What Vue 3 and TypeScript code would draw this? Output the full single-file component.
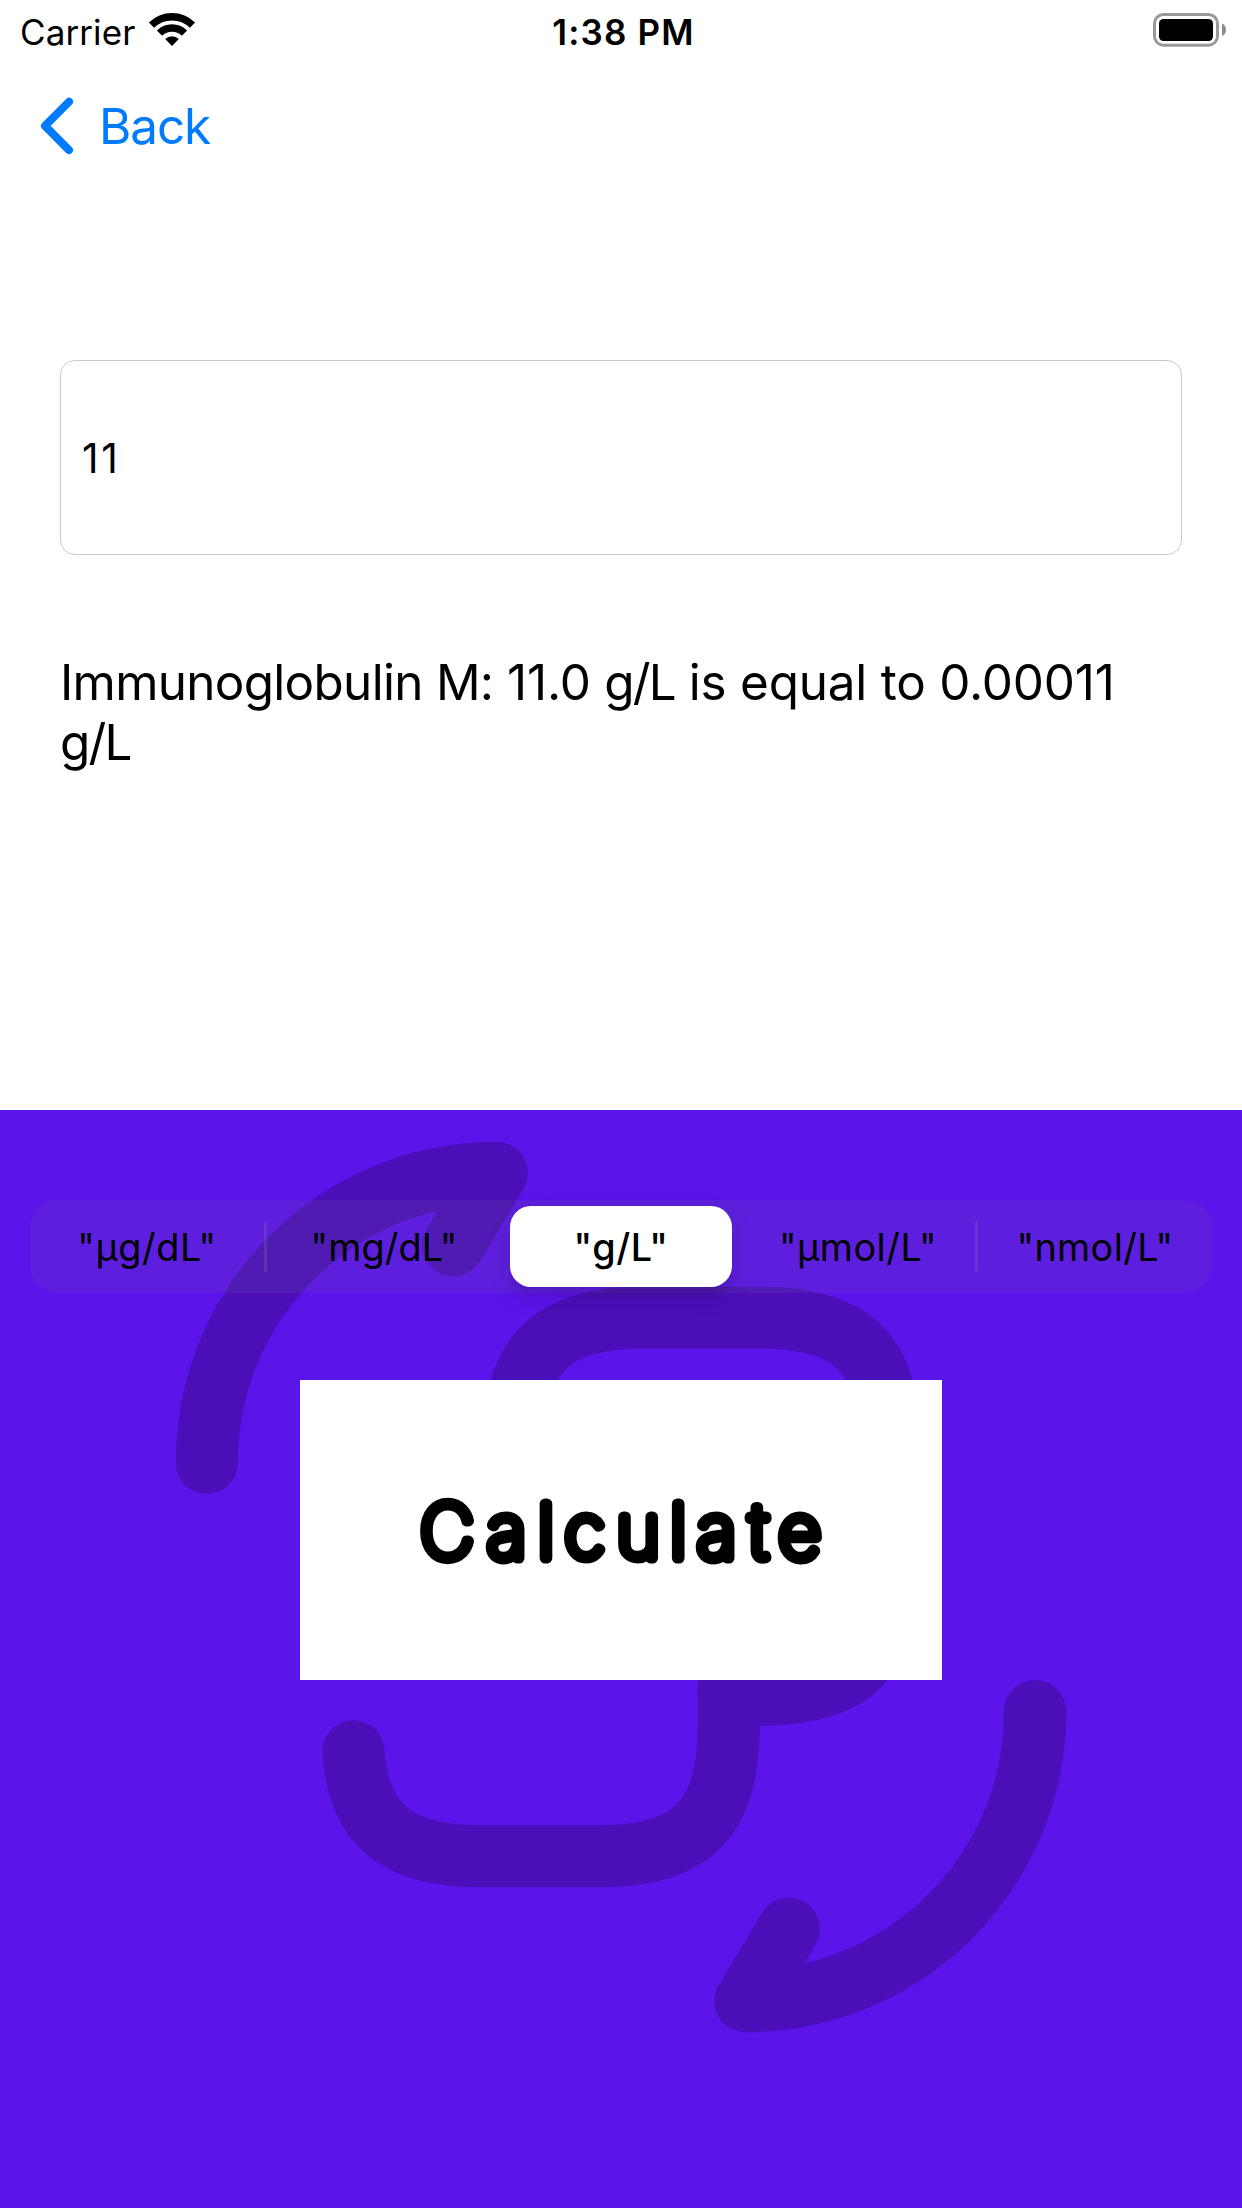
<script setup lang="ts">
import { ref } from 'vue'

interface Unit {
  label: string
  spacing: number
}

const units: Unit[] = [
  { label: '"µg/dL"', spacing: 0.6 },
  { label: '"mg/dL"', spacing: 0.13 },
  { label: '"g/L"', spacing: 0.57 },
  { label: '"µmol/L"', spacing: 0.55 },
  { label: '"nmol/L"', spacing: 0.4 },
]
const selected = ref(2)
const amount = ref('11')

const hasDivider = (i: number) =>
  i < units.length - 1 && i !== selected.value && i + 1 !== selected.value
</script>

<template>
  <div class="screen">
    <header class="status">
      <div class="side">
        <span class="carrier">Carrier</span>
        <svg class="wifi" width="48" height="36" viewBox="0 0 48 36">
          <g fill="none" stroke="#000" stroke-width="7.4">
            <path d="M3.5 13.2A29 29 0 0 1 44.5 13.2" />
            <path d="M11.5 21.2A17.7 17.7 0 0 1 36.5 21.2" />
          </g>
          <path d="M24 33.9L17.2 27A9.7 9.7 0 0 1 30.8 27Z" />
        </svg>
      </div>
      <span class="time">1:38 PM</span>
      <div class="side end">
        <svg width="74" height="34" viewBox="0 0 74 34">
          <rect x="1.5" y="1.5" width="63" height="30.7" rx="9" fill="none" stroke="#999" stroke-width="3" />
          <rect x="6" y="6" width="54" height="22" rx="4.5" />
          <path d="M69 10.5c2.6 1.1 4 3.4 4 6.3s-1.4 5.2-4 6.3z" fill="#8c8c8c" />
        </svg>
      </div>
    </header>

    <nav class="nav">
      <svg width="34" height="58" viewBox="0 0 34 58" fill="none" stroke="#007aff" stroke-width="8" stroke-linecap="round" stroke-linejoin="round">
        <path d="M29 4.7L5 28.9L29 53.1" />
      </svg>
      <span>Back</span>
    </nav>

    <main class="form">
      <div class="field">{{ amount }}</div>
      <p class="result"><span class="name">Immunoglobulin M:</span> 11.0 <span class="unit">g/L</span> is equal to 0.00011 <span class="unit">g/L</span></p>
    </main>

    <section class="panel">
      <svg class="art" width="994" height="994" viewBox="0 0 24 24" fill="none" stroke="#4a0fb9" stroke-width="1.5" stroke-linecap="round" stroke-linejoin="round">
        <path d="M22 15c0 3.87-3.13 7-7 7l1.05-1.75" />
        <path d="M2 9c0-3.87 3.13-7 7-7L7.95 3.75" />
        <path d="M9.4 9.4V8.6C9.4 6.4 10.3 5.5 12.5 5.5h2.9c2.2 0 3.1.9 3.1 3.1v2.9c0 2.2-.9 3.1-3.1 3.1h-.8" />
        <path d="M14.6 12v3.4c0 2.2-.9 3.1-3.1 3.1H8.57c-2.02 0-2.92-.8-3.03-2.53" />
      </svg>
      <div class="segments">
        <div
          v-for="(unit, i) in units"
          :key="unit.label"
          class="segment"
          :class="{ active: i === selected, divided: hasDivider(i) }"
          :style="{ letterSpacing: unit.spacing + 'px' }"
          @click="selected = i"
        >
          {{ unit.label }}
        </div>
      </div>
      <button class="calculate" type="button">
        <svg width="642" height="300" viewBox="300 1380 642 300">
          <text x="447 506.6 546 584.5 638 678.2 716.6 758.6 799.6" y="1558.3">Calculate</text>
        </svg>
      </button>
    </section>
  </div>
</template>

<style scoped>
.screen {
  width: 1242px;
  height: 2208px;
  display: flex;
  flex-direction: column;
  background: #fff;
  color: #000;
  font-family: Inter, "Liberation Sans", sans-serif;
  overflow: hidden;
}
.status {
  height: 60px;
  box-sizing: border-box;
  padding: 3px 15px 0 20px;
  display: flex;
  align-items: center;
  font-size: 35px;
}
.side {
  flex: 1;
  display: flex;
  align-items: center;
}
.end {
  justify-content: flex-end;
  margin-top: -3px;
}
.carrier {
  letter-spacing: 0.1px;
}
.wifi {
  margin: -3px 0 0 13px;
}
.time {
  font-weight: 600;
  letter-spacing: 1.15px;
}
.nav {
  height: 132px;
  padding-left: 40px;
  display: flex;
  align-items: center;
  gap: 25px;
  color: #007aff;
  font-size: 49.4px;
  letter-spacing: -1.05px;
}
.form {
  height: 918px;
  box-sizing: border-box;
  padding: 168px 60px 0;
}
.field {
  height: 195px;
  box-sizing: border-box;
  border: 1px solid #c9c9cb;
  border-radius: 15px;
  padding-left: 21px;
  display: flex;
  align-items: center;
  font-size: 40.8px;
  letter-spacing: 2.6px;
}
.result {
  margin: 98.3px 0 0;
  font-size: 49.4px;
  line-height: 59.5px;
  letter-spacing: -0.19px;
}
.name {
  letter-spacing: -0.68px;
}
.unit {
  letter-spacing: -1.8px;
}
.panel {
  flex: 1;
  position: relative;
  display: flex;
  flex-direction: column;
  align-items: center;
  background: #5b14ea;
}
.art {
  position: absolute;
  left: 124px;
  top: -20px;
}
.segments {
  position: relative;
  width: 1182px;
  height: 93px;
  margin-top: 90px;
  display: flex;
  justify-content: center;
  border-radius: 27px;
  background: rgba(118, 118, 128, 0.12);
  font-size: 37.8px;
}
.segment {
  position: relative;
  flex: 0 0 237px;
  display: flex;
  align-items: center;
  justify-content: center;
}
.divided::after {
  content: "";
  position: absolute;
  right: -1px;
  top: 21px;
  width: 3px;
  height: 51px;
  border-radius: 1.5px;
  background: rgba(142, 142, 147, 0.22);
}
.active {
  flex-basis: 222px;
  margin: 6px 7.5px;
  border-radius: 21px;
  background: #fff;
  box-shadow: 0 9px 24px rgba(0, 0, 0, 0.12), 0 9px 3px rgba(0, 0, 0, 0.04);
  font-weight: 500;
}
.calculate {
  position: relative;
  width: 642px;
  height: 300px;
  margin-top: 87px;
  padding: 0;
  border: 0;
  background: #fff;
}
.calculate svg {
  display: block;
}
.calculate text {
  font-family: Inter, sans-serif;
  font-weight: 100;
  font-size: 74px;
  text-anchor: middle;
  fill: #000;
  stroke: #000;
  stroke-width: 11px;
  stroke-linejoin: round;
}
</style>

<style>
body {
  background: #fff;
}
</style>
